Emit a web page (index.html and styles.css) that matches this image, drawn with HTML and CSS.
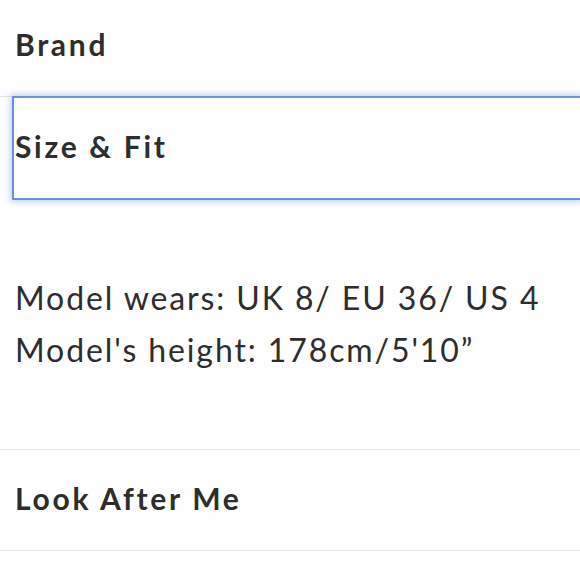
FILE: index.html
```html
<!DOCTYPE html>
<html lang="en">
<head>
<meta charset="utf-8">
<title>Product details</title>
<link rel="stylesheet" href="styles.css">
</head>
<body>
<div class="accordion">
  <section class="item">
    <button class="header">Brand</button>
  </section>
  <section class="item open">
    <button class="header focused">Size &amp; Fit</button>
    <div class="panel">
      <p>Model wears: UK 8/ EU 36/ US 4</p>
      <p>Model's height: 178cm/5'10”</p>
    </div>
  </section>
  <section class="item last">
    <button class="header">Look After Me</button>
  </section>
</div>
</body>
</html>
```
FILE: styles.css
```css
html, body {
  margin: 0;
  padding: 0;
  background: #ffffff;
  overflow: hidden;
}
body {
  font-family: Lato, "Liberation Sans", sans-serif;
  color: #2d2d2d;
}
.accordion {
  width: 100%;
  display: flex;
  flex-direction: column;
}
.item {
  border-bottom: 1px solid #e6e6e6;
  display: flex;
  flex-direction: column;
}
.header {
  display: flex;
  align-items: center;
  height: 96px;
  margin: 0;
  padding: 0 0 8px 15px;
  border: 0;
  background: #fff;
  font-family: Lato, "Liberation Sans", sans-serif;
  font-weight: 700;
  font-size: 30px;
  letter-spacing: 2.7px;
  color: #2d2d2d;
  text-align: left;
}
.item.open .header,
.item.last .header {
  height: 100px;
  padding-bottom: 4px;
}
.header.focused {
  margin: 1px 0 1px 14px;
  height: 99px;
  padding-left: 1px;
  box-shadow: 0 0 0 2px #6593d4, 0 0 6px 4px rgba(120, 162, 220, 0.45);
  position: relative;
}
.panel {
  padding: 73px 0 73px 15px;
}
.panel p {
  margin: 0;
  font-size: 32px;
  line-height: 52px;
  font-weight: 400;
  letter-spacing: 1.9px;
}
```
